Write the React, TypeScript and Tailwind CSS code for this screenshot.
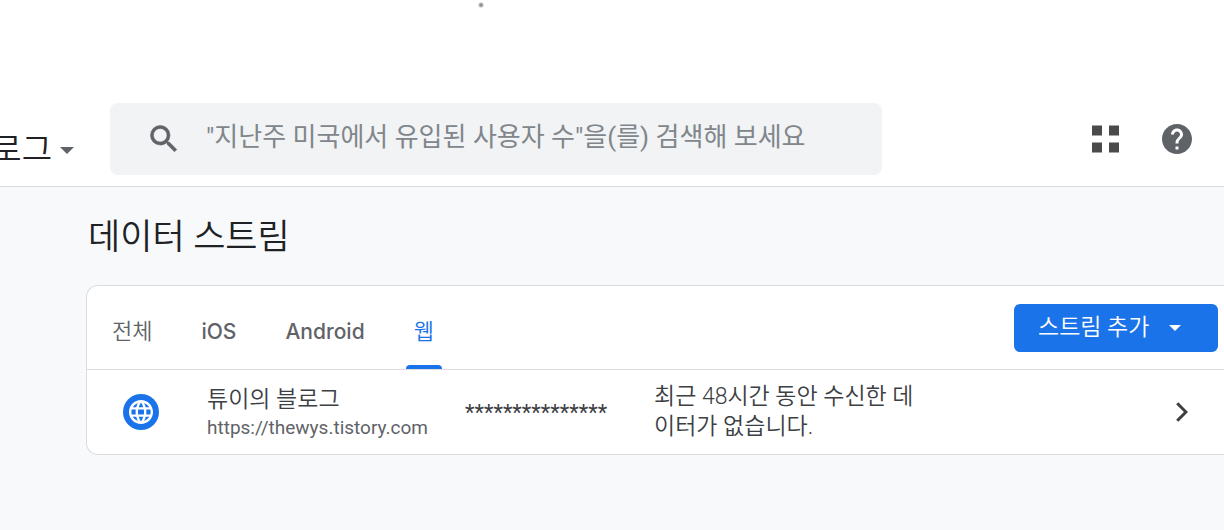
import React from "react";

const SANS = "font-['Roboto','Noto_Sans_CJK_KR',sans-serif]";

function SearchIcon() {
  return (
    <svg viewBox="0 0 24 24" className="size-9 shrink-0" fill="#5f6368" stroke="#5f6368" strokeWidth=".4" aria-hidden="true">
      <path d="M15.5 14h-.79l-.28-.27A6.47 6.47 0 0 0 16 9.5 6.5 6.5 0 1 0 9.500 16c1.610 0 3.090-.59 4.230-1.570l.27.28v.79l5 4.990L20.490 19l-4.990-5zm-6 0C7.010 14 5 11.990 5 9.500S7.010 5 9.500 5 14 7.010 14 9.500 11.990 14 9.500 14z" />
    </svg>
  );
}

function Caret({ className }: { className: string }) {
  return (
    <svg viewBox="0 0 14 7" className={className} fill="currentColor" aria-hidden="true">
      <path d="M0 0h14L7 7z" />
    </svg>
  );
}

function AppsIcon() {
  return (
    <svg viewBox="0 0 27 28" className="h-7 w-[27px]" fill="#4a4a4a" aria-hidden="true">
      <path d="M0 .5h10v10H0zM17 .5h10v10H17zM0 17.500h10v10H0zM17 17.500h10v10H17z" />
    </svg>
  );
}

function HelpIcon() {
  return (
    <svg viewBox="0 0 24 24" className="size-9" fill="#5f6368" aria-hidden="true">
      <path d="M12 2C6.480 2 2 6.480 2 12s4.480 10 10 10 10-4.480 10-10S17.520 2 12 2zm1 17h-2v-2h2v2zm2.070-7.750l-.9.92C13.450 12.900 13 13.500 13 15h-2v-.5c0-1.100.45-2.100 1.170-2.830l1.240-1.260c.37-.36.59-.86.59-1.410 0-1.100-.9-2-2-2s-2 .9-2 2H8c0-2.210 1.790-4 4-4s4 1.790 4 4c0 .88-.36 1.680-.93 2.250z" />
    </svg>
  );
}

function GlobeIcon() {
  return (
    <span className="flex size-9 shrink-0 items-center justify-center rounded-full bg-[#1a73e8]">
      <svg viewBox="2 2 20 20" className="size-6" fill="#fff" aria-hidden="true">
        <path d="M11.990 2C6.470 2 2 6.480 2 12s4.470 10 9.990 10C17.520 22 22 17.520 22 12S17.520 2 11.990 2zm6.930 6h-2.950a15.650 15.650 0 0 0-1.380-3.560A8.030 8.030 0 0 1 18.920 8zM12 4.040c.83 1.200 1.480 2.530 1.910 3.960h-3.820c.43-1.430 1.080-2.760 1.910-3.960zM4.260 14C4.100 13.360 4 12.690 4 12s.1-1.360.26-2h3.380c-.08.66-.14 1.320-.14 2s.06 1.340.14 2H4.260zm.82 2h2.950c.32 1.250.78 2.450 1.380 3.560A7.990 7.990 0 0 1 5.080 16zm2.950-8H5.080a7.990 7.990 0 0 1 4.330-3.560A15.650 15.650 0 0 0 8.030 8zM12 19.960c-.83-1.200-1.480-2.530-1.910-3.960h3.820c-.43 1.430-1.080 2.760-1.910 3.960zM14.340 14H9.660c-.09-.66-.16-1.320-.16-2s.07-1.350.16-2h4.680c.09.65.16 1.320.16 2s-.07 1.340-.16 2zm.25 5.560c.6-1.110 1.060-2.310 1.380-3.560h2.950a8.030 8.030 0 0 1-4.330 3.560zM16.360 14c.08-.66.14-1.320.14-2s-.06-1.340-.14-2h3.380c.16.64.26 1.310.26 2s-.1 1.360-.26 2h-3.380z" />
      </svg>
    </span>
  );
}

const tabs = ["전체", "iOS", "Android", "웹"];

function Tab({ label, active }: { label: string; active: boolean }) {
  const latin = /[a-z]/i.test(label);
  return (
    <button
      type="button"
      role="tab"
      aria-selected={active}
      className={
        active
          ? "flex flex-col items-center justify-between text-[#1a73e8]"
          : "flex flex-col items-center justify-between text-[#5f6368]"
      }
    >
      <span
        className={
          latin
            ? "px-2 pt-[30px] font-['Inter',sans-serif] text-[21px] leading-8 font-medium"
            : "px-2 pt-[30px] text-[22px] leading-8 font-[350]"
        }
      >
        {label}
      </span>
      {active && <span className="h-1 w-full rounded-t bg-[#1a73e8]" />}
    </button>
  );
}

export default function App() {
  return (
    <div className={`min-h-screen overflow-x-hidden bg-[#f8f9fb] ${SANS}`}>
      <header className="border-b border-[#dadce0] bg-white">
        <div className="flex h-[103px] pt-[2px] pl-[478px]">
          <svg viewBox="0 0 6 6" className="size-1.5" aria-hidden="true">
            <circle cx="3" cy="3" r="2.500" fill="#b4b4b4" />
            <circle cx="3" cy="3" r="1.200" fill="#8c8c8c" />
          </svg>
        </div>
        <div className="flex items-center pb-[11px]">
          <button type="button" className="flex h-[72px] w-[110px] shrink-0 items-center justify-end gap-2 overflow-hidden pt-[22px] pr-9 text-[#5f6368]">
            <span className="text-[33px] leading-10 font-[350] whitespace-nowrap text-[#202124]">로그</span>
            <Caret className="h-[7px] w-3.5 shrink-0" />
          </button>
          <form role="search" className="flex h-[72px] w-[772px] items-center gap-6 rounded-lg bg-[#f1f3f4] px-9">
            <SearchIcon />
            <input
              type="search"
              aria-label="검색"
              placeholder={'"지난주 미국에서 유입된 사용자 수"을(를) 검색해 보세요'}
              className="min-w-0 flex-1 bg-transparent pb-1 text-[26px] text-[#202124] outline-none placeholder:text-[#80868b]"
            />
          </form>
          <nav className="ml-auto flex items-center gap-10 pr-[29px]">
            <button type="button" aria-label="앱">
              <AppsIcon />
            </button>
            <button type="button" aria-label="도움말">
              <HelpIcon />
            </button>
          </nav>
        </div>
      </header>

      <main className="pt-[26px] pl-[86px]">
        <h1 className="pl-0.5 text-[35px] leading-[50px] font-[350] text-[#202124]">데이터 스트림</h1>

        <section className="mt-[22px] rounded-l-xl border border-r-0 border-[#dadce0] bg-white">
          <div className="flex justify-between border-b border-[#dadce0] pr-1.5 pl-[17px]">
            <div role="tablist" className="flex h-[83px] gap-[33px]">
              {tabs.map((label) => (
                <Tab key={label} label={label} active={label === "웹"} />
              ))}
            </div>
            <button type="button" className="mt-[18px] flex h-12 w-[204px] items-center gap-5 rounded-md bg-[#1a73e8] px-6 text-[23px] text-white">
              <span className="leading-8 font-[350]">스트림 추가</span>
              <Caret className="h-1.5 w-3" />
            </button>
          </div>

          <a href="#stream" className="flex h-[84px] items-center pr-9 pl-9">
            <GlobeIcon />
            <div className="ml-12 w-[258px]">
              <div className="text-[23px] leading-8 font-[350] text-[#3c4043]">튜이의 블로그</div>
              <div className="text-[19px] leading-6 text-[#5f6368]">https://thewys.tistory.com</div>
            </div>
            <div className="w-[189px] text-[22px] text-[#3c4043]">***************</div>
            <div className="w-[262px] text-[23px] leading-[30px] font-[350] break-all text-[#3c4043]">
              최근 48시간 동안 수신한 데이터가 없습니다.
            </div>
            <svg viewBox="0 0 12 20" className="ml-auto h-5 w-3" fill="none" stroke="#3c4043" strokeWidth="3" aria-hidden="true">
              <path d="M1.200 1.200 10 10l-8.800 8.800" />
            </svg>
          </a>
        </section>
      </main>
    </div>
  );
}
